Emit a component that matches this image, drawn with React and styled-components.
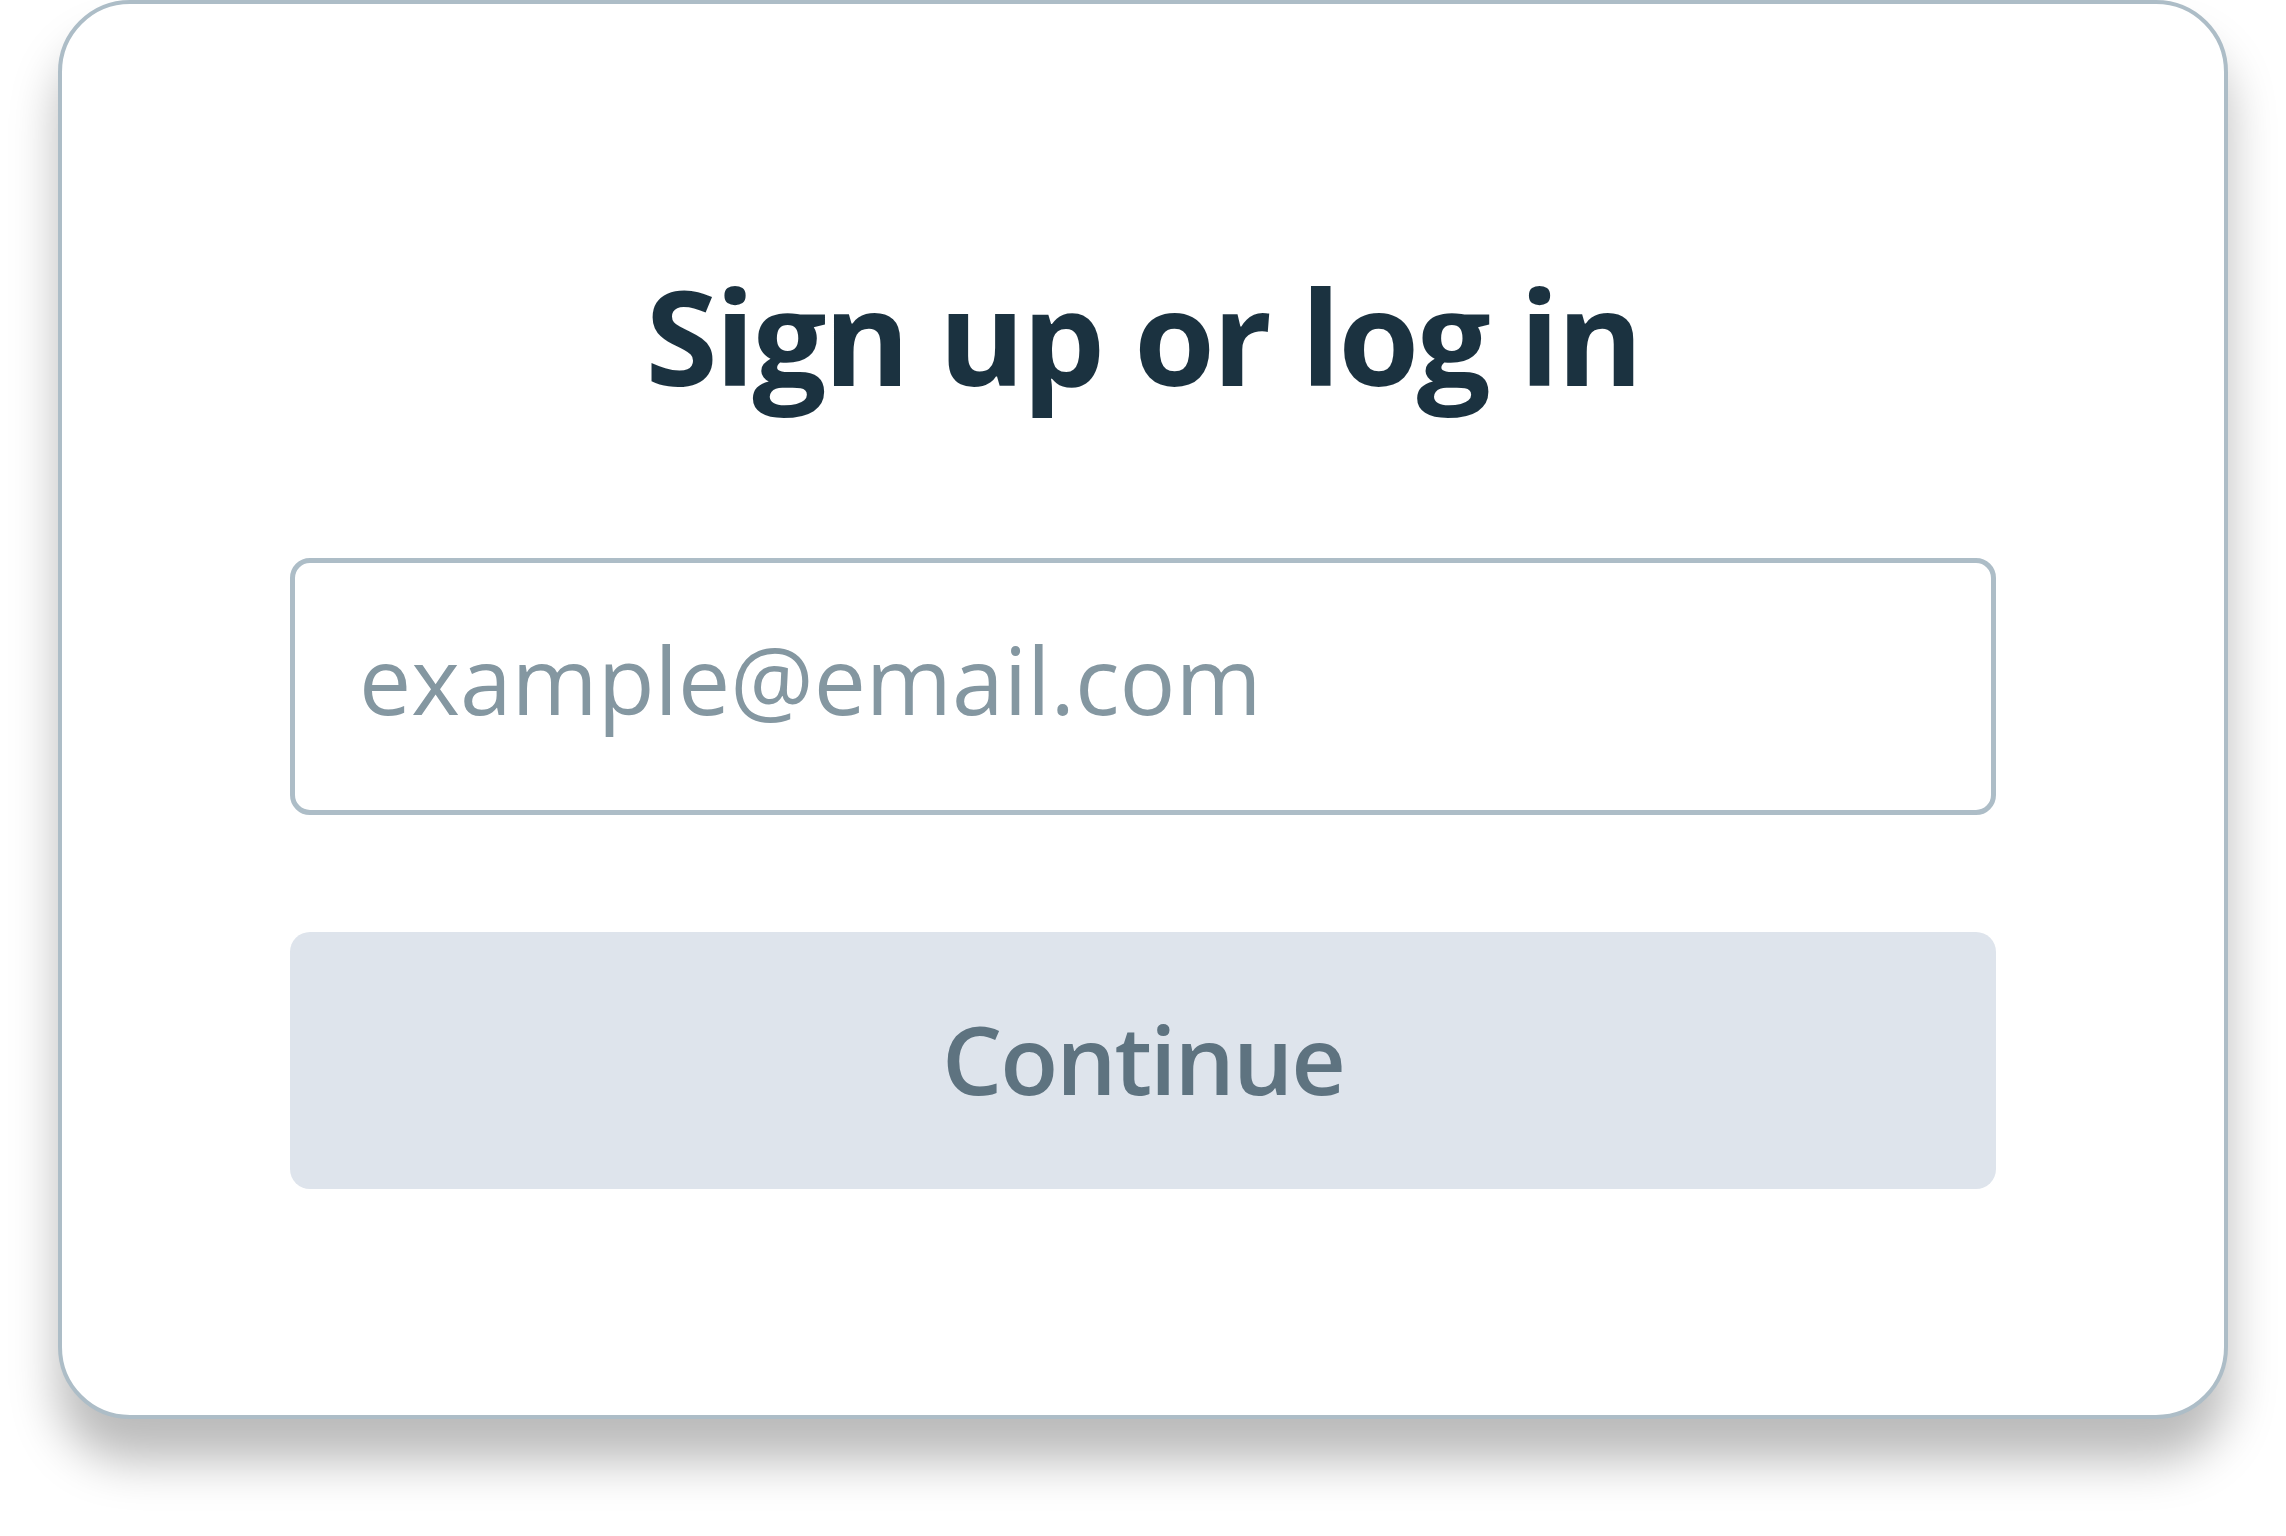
import React from 'react';
import styled, { createGlobalStyle } from 'styled-components';

const GlobalStyle = createGlobalStyle`
  html, body {
    margin: 0;
    padding: 0;
    background: #ffffff;
  }

  body {
    font-family: 'Open Sans', 'Noto Sans', sans-serif;
  }
`;

const Page = styled.div`
  display: flex;
  justify-content: center;
  width: 2286px;
  height: 1536px;
  overflow: hidden;
`;

const Card = styled.div`
  box-sizing: border-box;
  width: 2170px;
  height: 1419px;
  padding: 0 228px;
  background: #ffffff;
  border: 4px solid #adbdc7;
  border-radius: 72px;
  box-shadow: 0 42px 48px rgba(0, 0, 0, 0.27);
  display: flex;
  flex-direction: column;
`;

const Title = styled.h1`
  margin: 266px 0 0;
  font-size: 131px;
  line-height: 1;
  font-weight: 700;
  letter-spacing: -2.6px;
  color: #1b3240;
  text-align: center;
`;

const EmailInput = styled.input`
  box-sizing: border-box;
  width: 100%;
  height: 257px;
  margin-top: 157px;
  padding: 0 0 16px 64px;
  border: 5px solid #adbdc7;
  border-radius: 20px;
  background: #ffffff;
  font-family: 'Open Sans', 'Noto Sans', sans-serif;
  font-size: 93px;
  font-weight: 400;
  color: #1b3240;
  outline: none;

  &::placeholder {
    color: #8497a1;
    opacity: 1;
  }
`;

const ContinueButton = styled.button`
  box-sizing: border-box;
  width: 100%;
  height: 257px;
  margin-top: 117px;
  padding: 0 0 6px;
  border: none;
  border-radius: 20px;
  background: #dee4ec;
  color: #5e7380;
  font-family: 'Open Sans', 'Noto Sans', sans-serif;
  font-size: 95px;
  font-weight: 600;
  letter-spacing: -2px;
  cursor: pointer;
`;

const App = () => {
  return (
    <>
      <GlobalStyle />
      <Page>
        <Card>
          <Title>Sign up or log in</Title>
          <EmailInput type="email" placeholder="example@email.com" />
          <ContinueButton type="button">Continue</ContinueButton>
        </Card>
      </Page>
    </>
  );
};

export default App;
